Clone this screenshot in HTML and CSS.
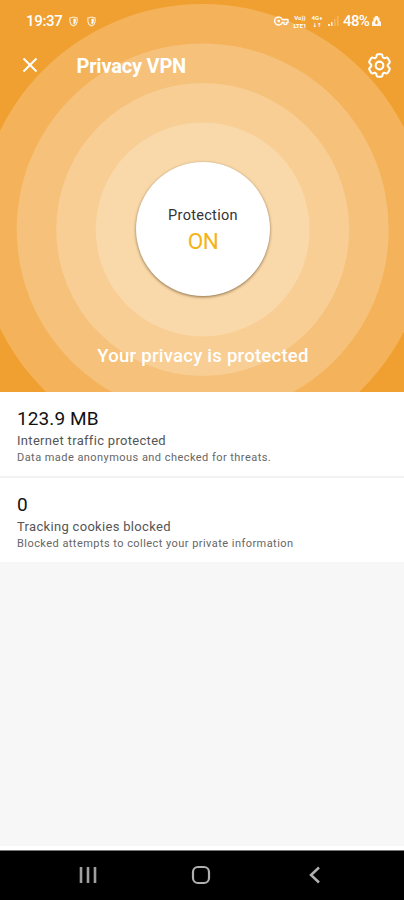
FILE: index.html
```
<!DOCTYPE html>
<html lang="en">
<head>
<meta charset="utf-8">
<title>Privacy VPN</title>
<link rel="stylesheet" href="styles.css">
</head>
<body>
<main class="screen">
  <section class="hero">
    <svg class="rings" viewBox="0 0 404 392" aria-hidden="true">
      <circle cx="202.7" cy="229.5" r="225.5" fill="#f4b35b"/>
      <circle cx="202.7" cy="229.5" r="186" fill="#f6c17a"/>
      <circle cx="202.7" cy="229.5" r="146.5" fill="#f8ce94"/>
      <circle cx="202.7" cy="229.5" r="107" fill="#f9d8a9"/>
    </svg>
    <div class="statusbar">
      <span class="clock">19:37</span>
      <svg class="shield" viewBox="0 0 10 12"><path d="M1 2 5 1l4 1v4.500Q8.500 9.500 5 11 1.500 9.500 1 6.500Z" fill="none" stroke="#fff" stroke-opacity=".8" stroke-width="1.200"/><path d="M5 3h2.500v3.500Q7 8.500 5 9.300Z" fill="#fff"/></svg>
      <svg class="shield" viewBox="0 0 10 12"><path d="M1 2 5 1l4 1v4.500Q8.500 9.500 5 11 1.500 9.500 1 6.500Z" fill="none" stroke="#fff" stroke-opacity=".8" stroke-width="1.200"/><path d="M5 3h2.500v3.500Q7 8.500 5 9.300Z" fill="#fff"/></svg>
      <span class="spacer"></span>
      <svg class="key" viewBox="0 0 15 10"><path d="M8.300 3.500A4 4 0 1 0 8.300 6.500H10v1.800h2.700V6.500H14v-3Z" fill="none" stroke="#fff" stroke-width="1.300" stroke-linejoin="round"/><circle cx="4.700" cy="5" r="1.300" fill="#fff"/></svg>
      <span class="net volte"><span>Vo))</span><span>LTE1</span></span>
      <span class="net data"><span>4G+</span><span class="arrows">↓↑</span></span>
      <svg class="signal" viewBox="0 0 12 12"><path d="M1 9h2v2H1zM4 7h1.500v4H4z" fill="#fff" opacity=".85"/><path d="M7 4h1.500v7H7zM10 1h1.500v10H10z" fill="#fff" opacity=".25"/></svg>
      <span class="percent">48%</span>
      <svg class="battery" viewBox="0 0 9 12"><path d="M3 1h3v1.500h1.500v3L9 7v4H0V7l1.500-1.500v-3H3Z" fill="#fff" fill-opacity=".9"/><path d="m4.500 4.500 1.500 3H3Z" fill="#f0a030"/><circle cx="4.500" cy="8" r="1.200" fill="#f0a030"/></svg>
    </div>
    <header class="toolbar">
      <svg class="close" viewBox="0 0 16 16"><path d="m1.500 1.500 13 13m0-13-13 13" stroke="#fff" stroke-width="2"/></svg>
      <h1>Privacy VPN</h1>
      <svg class="gear" viewBox="0 0 24 24" fill="none" stroke="#fff" stroke-width="2" stroke-linejoin="round"><path d="M10.300 1.200h3.400q.8 0 1 .9l.4 1.700q.2.700 1.400 1.200l1.700-.5q1.200-.4 1.800.5l1.700 3q.5.900-.2 1.600l-1.100 1.100q-.6.600-.6 1.300t.6 1.300l1.100 1.100q.7.700.2 1.600l-1.700 3q-.6.900-1.800.5l-1.700-.5q-1.200.5-1.400 1.200l-.4 1.700q-.2.900-1 .9h-3.400q-.8 0-1-.9l-.4-1.700q-.2-.7-1.400-1.200l-1.700.5q-1.200.4-1.800-.5l-1.700-3q-.5-.9.200-1.600l1.100-1.100q.6-.6.600-1.300t-.6-1.300L2.500 9.600q-.7-.7-.2-1.600l1.700-3q.6-.9 1.800-.5l1.700.5q1.200-.5 1.400-1.200l.4-1.700q.2-.9 1-.9Z"/><circle cx="12" cy="12" r="3.700"/></svg>
    </header>
    <div class="toggle">
      <span class="toggle-label">Protection</span>
      <span class="toggle-state">ON</span>
    </div>
    <p class="message">Your privacy is protected</p>
  </section>
  <section class="stat">
    <h2 class="traffic">123.9 MB</h2>
    <p class="name">Internet traffic protected</p>
    <p class="detail">Data made anonymous and checked for threats.</p>
  </section>
  <section class="stat last">
    <h2>0</h2>
    <p class="name">Tracking cookies blocked</p>
    <p class="detail">Blocked attempts to collect your private information</p>
  </section>
  <div class="blank"></div>
  <nav class="navbar">
    <svg class="recents" viewBox="0 0 18 18"><path d="M2 1v16M9 1v16M16 1v16" stroke="#a0a0a0" stroke-width="2.600"/></svg>
    <svg class="home" viewBox="0 0 20 20"><rect x="2" y="2" width="16" height="16" rx="5" fill="none" stroke="#b0b0b0" stroke-width="2.200"/></svg>
    <svg class="back" viewBox="0 0 12 18"><path d="M10 1.500 2 9l8 7.500" fill="none" stroke="#b0b0b0" stroke-width="2.500"/></svg>
  </nav>
</main>
</body>
</html>
```
FILE: styles.css
```
* { box-sizing: border-box; }
body, h1, h2, p { margin: 0; }
body { font-family: Roboto, "Liberation Sans", sans-serif; background: #f7f7f7; }
svg { display: block; flex: none; }
.screen { width: 404px; height: 900px; display: flex; flex-direction: column; overflow: hidden; }
.hero { position: relative; height: 392px; flex: none; background: #f0a030; color: #fff; display: flex; flex-direction: column; align-items: center; overflow: hidden; }
.rings { position: absolute; inset: 0; width: 404px; height: 392px; }
.statusbar, .toolbar, .toggle, .message { position: relative; }
.statusbar { width: 100%; height: 42px; padding: 0 23px 0 26px; display: flex; align-items: center; }
.clock { font-size: 15px; font-weight: 500; width: 43px; letter-spacing: -.3px; }
.shield { width: 9px; height: 11px; margin-right: 9px; }
.spacer { flex: 1; }
.key { width: 15px; height: 10px; margin-right: 3px; }
.net { display: flex; flex-direction: column; align-items: center; gap: 1px; font-size: 6px; line-height: 7px; font-weight: 700; }
.volte { width: 16px; margin-right: 2px; }
.data { width: 14px; margin-right: 3px; }
.arrows { font-family: "DejaVu Sans", sans-serif; font-size: 5.500px; }
.signal { width: 12px; height: 12px; margin-right: 4px; }
.percent { font-size: 15px; font-weight: 500; width: 29px; letter-spacing: -.6px; }
.battery { width: 9px; height: 12px; }
.toolbar { width: 100%; height: 46px; padding: 0 12px 0 22px; display: flex; align-items: center; }
.close { width: 16px; height: 16px; margin-right: 38.500px; }
h1 { flex: 1; font-size: 20px; line-height: 24px; font-weight: 700; letter-spacing: -.2px; padding-top: 1px; }
.gear { width: 25px; height: 25px; }
.toggle { width: 134px; height: 134px; margin: 74px 0 0 2px; border-radius: 50%; background: #fff; box-shadow: 0 1px 3px rgba(80, 55, 20, .65); display: flex; flex-direction: column; align-items: center; padding-top: 44px; }
.toggle-label { font-size: 14.500px; line-height: 20px; color: #333; letter-spacing: .3px; }
.toggle-state { font-size: 22.500px; line-height: 30px; color: #f5b315; letter-spacing: -.4px; }
.message { font-size: 18.500px; line-height: 24px; font-weight: 500; letter-spacing: .26px; margin: 48px 0 0 2px; }
.stat { height: 86px; flex: none; background: #fff; border-bottom: 2px solid #f3f3f3; padding: 15px 17px 0; }
.last { height: 84px; border-bottom: 0; }
h2 { font-size: 19px; line-height: 24px; font-weight: 400; color: #111; }
.traffic { letter-spacing: .1px; }
.name { font-size: 13px; line-height: 18px; margin-top: 1px; color: #555; letter-spacing: .31px; }
.detail { font-size: 11px; line-height: 15px; color: #666; letter-spacing: .45px; }
.blank { flex: 1; background: #f7f7f7; border-bottom: 4px solid #fff; }
.navbar { height: 50px; flex: none; background: #000; border-top: 1px solid #777; display: flex; align-items: center; padding-left: 79px; }
.recents { width: 18px; height: 18px; margin-right: 94px; }
.home { width: 20px; height: 20px; margin-right: 98px; }
.back { width: 12px; height: 18px; }
.navbar svg { margin-bottom: 1px; }
```
